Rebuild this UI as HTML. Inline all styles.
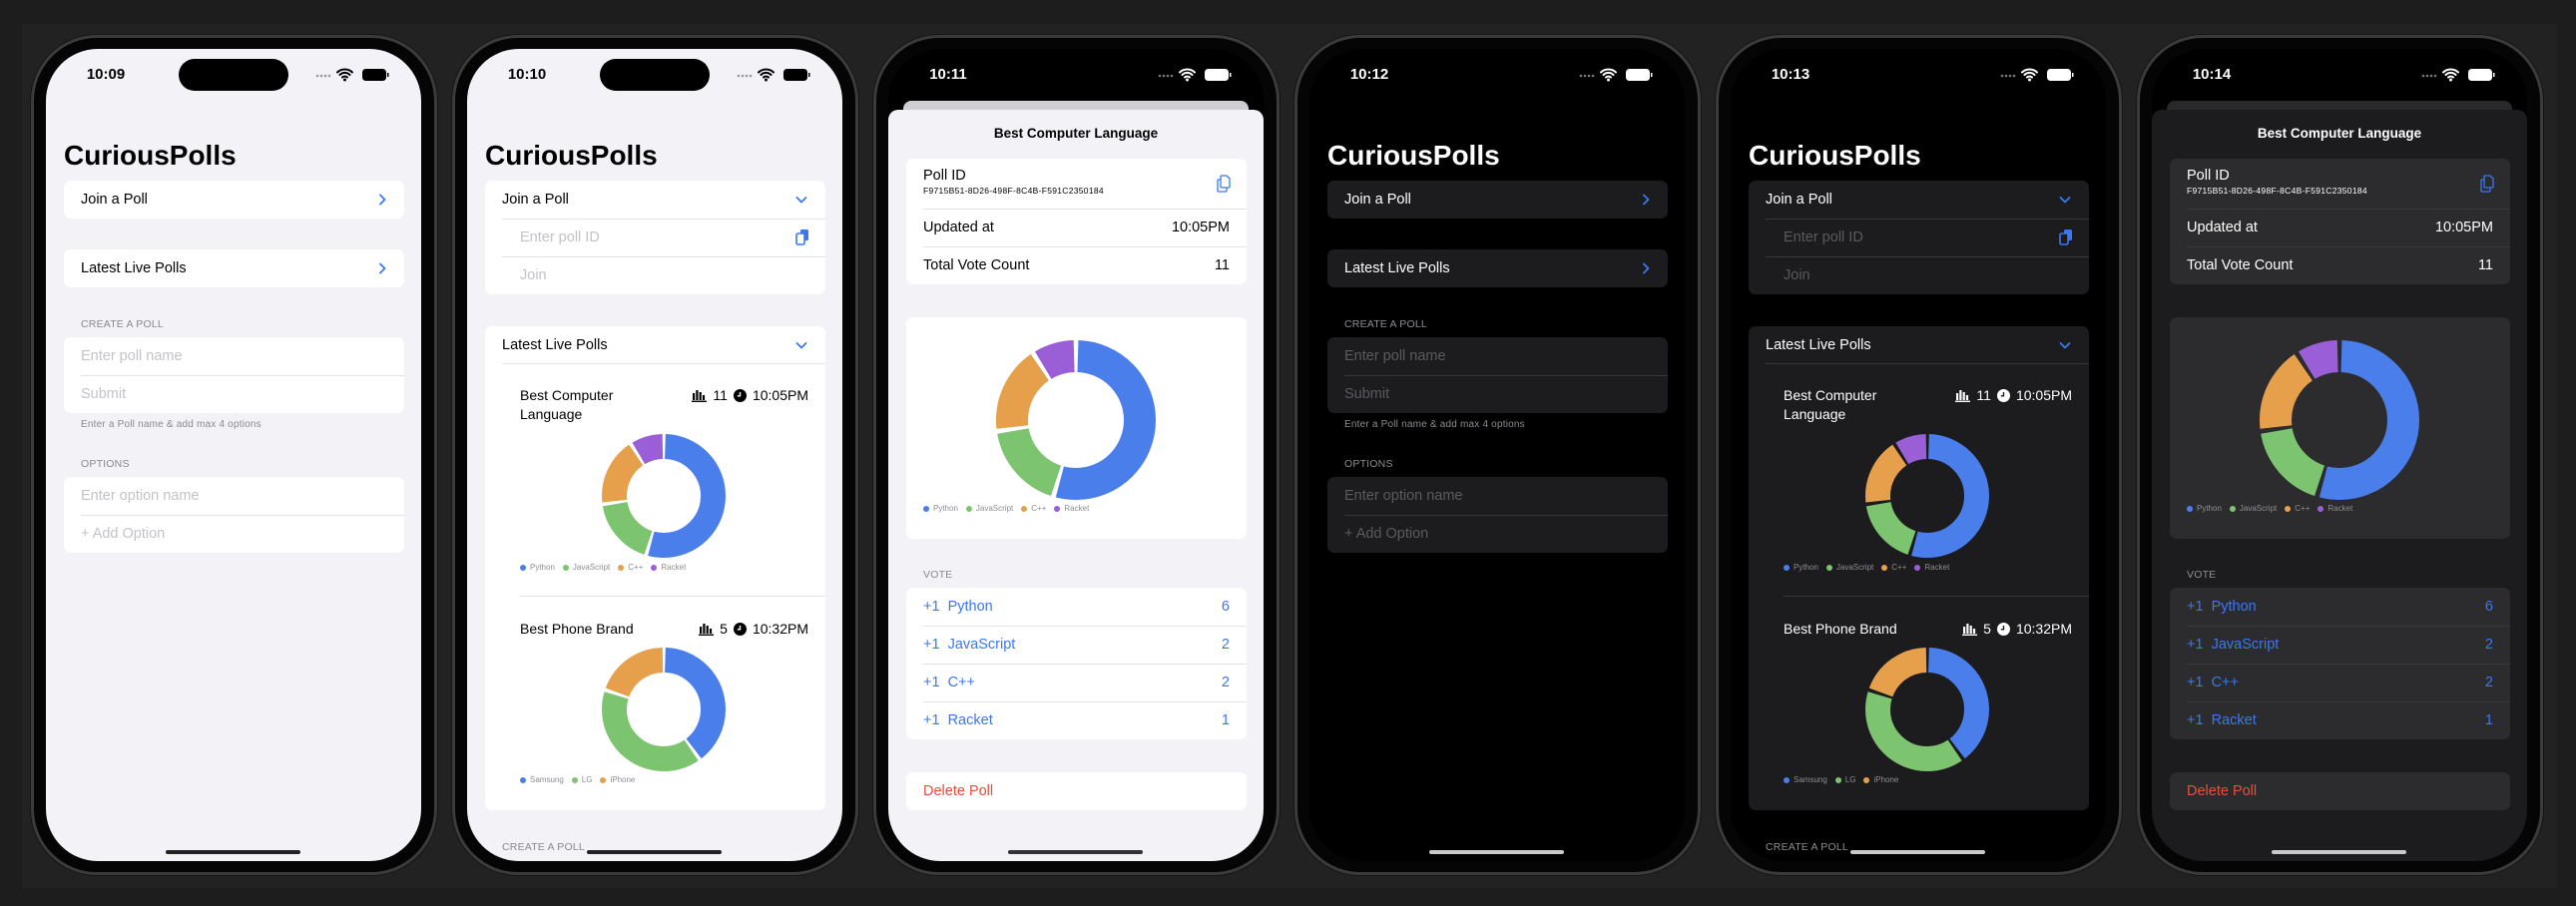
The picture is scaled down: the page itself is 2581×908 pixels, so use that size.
<!DOCTYPE html>
<html><head><meta charset="utf-8">
<style>
*{margin:0;padding:0;box-sizing:border-box}
body{width:2581px;height:908px;background:#1d1d1d;position:relative;overflow:hidden;font-family:"Liberation Sans",sans-serif}
.bgr{position:absolute;left:22px;top:24px;width:2540px;height:866px;background:#222}
.ph{position:absolute;top:35px;width:407px;height:842px;border-radius:66px;background:#050505;border:3px solid #3b3b3d;box-shadow:0 0 0 1px #151515}
.sc{position:absolute;left:12px;top:11px;width:376px;height:814px;border-radius:52px;overflow:hidden;background:#f2f2f7}
.d .sc{background:#000}
.a{position:absolute}
.time{left:30px;top:17px;width:60px;text-align:center;font-size:15px;line-height:18px;font-weight:bold;color:#000}
.d .time,.blk .time{color:#fff}
.isl{left:133px;top:10px;width:110px;height:32px;border-radius:16px;background:#000}
.title{left:18px;top:93px;font-size:28px;line-height:28px;font-weight:bold;color:#000}
.d .title{color:#fff}
.card{position:absolute;left:18px;width:341px;background:#fff;border-radius:7px;overflow:hidden}
.d .card{background:#1c1c1e}
.row{position:relative;height:38px;display:flex;align-items:center;padding:0 17px;font-size:14.5px;color:#000}
.d .row{color:#fff}
.row+.row:before{content:"";position:absolute;left:17px;right:0;top:0;border-top:1px solid #e2e2e6}
.d .row+.row:before{border-color:#38383a}
.ph1{color:#c3c3c7!important}
.d .ph1{color:#5a5a5f!important}
.ind{padding-left:35px}
.lbl{position:absolute;left:35px;font-size:10.5px;line-height:12px;color:#8a8a8e;letter-spacing:.2px}
.d .lbl{color:#8d8d93}
.chev{position:absolute;right:18px;top:13px}
.home{left:120px;top:803px;width:135px;height:4px;border-radius:2px;background:#222}
.d .home,.blk .home{background:#c9c9c9}
.sb{position:absolute;left:270px;top:18px}
.stat{position:absolute;right:17px;font-size:14px;line-height:17px;display:flex;align-items:center;gap:6px;color:#000}
.d .stat{color:#fff}
.ptitle{position:absolute;left:35px;font-size:14px;line-height:19px;color:#000}
.d .ptitle{color:#fff}
.leg{position:absolute;left:35px;font-size:8px;line-height:10px;color:#8e8e93;display:flex;align-items:center;gap:4px}
.leg i{display:inline-block;width:6px;height:6px;border-radius:3px;margin-left:4px}
.leg i:first-child{margin-left:0}
.sep{position:absolute;left:35px;right:0;border-top:1px solid #e2e2e6}
.d .sep{border-color:#38383a}
.sheet{position:absolute;left:0;top:61px;width:376px;height:760px;border-radius:10px 10px 0 0;background:#f2f2f7}
.d .sheet{background:#1c1c1e}
.d .sheet .card{background:#2c2c2e}
.strip{position:absolute;left:15px;top:52px;width:346px;height:20px;border-radius:8px;background:#cfcfd3}
.d .strip{background:#29292b}
.vote{color:#3b78ef!important;justify-content:space-between}
.del{color:#e5503d!important}
.sheet .lbl{left:35px}
</style></head><body>
<div class="bgr"></div>

<!-- PHONE 1 -->
<div class="ph" style="left:31px"><div class="sc">
 <div class="a time">10:09</div><div class="a isl"></div>
 <svg class="sb" width="74" height="16" viewBox="0 0 74 16"><g fill="#9a9a9a"><circle cx="2" cy="9" r="1.3"/><circle cx="6" cy="9" r="1.3"/><circle cx="10" cy="9" r="1.3"/><circle cx="14" cy="9" r="1.3"/></g><path d="M22 5.5a11 11 0 0 1 15 0M24.5 8a7 7 0 0 1 10 0M27 10.5a3.5 3.5 0 0 1 5 0" stroke="#000" stroke-width="2" fill="none" stroke-linecap="round"/><circle cx="29.5" cy="13" r="1.5" fill="#000"/><rect x="47" y="2" width="24" height="12" rx="3.5" fill="#000"/><rect x="72" y="6" width="1.5" height="4" fill="#000"/></svg>
 <div class="a title">CuriousPolls</div>
 <div class="card" style="top:132px"><div class="row">Join a Poll<svg class="chev" width="8" height="12" viewBox="0 0 8 12"><path d="M2 1.5l4.5 4.5-4.5 4.5" stroke="#3b78ef" stroke-width="1.8" fill="none" stroke-linecap="round" stroke-linejoin="round"/></svg></div></div>
 <div class="card" style="top:201px"><div class="row">Latest Live Polls<svg class="chev" width="8" height="12" viewBox="0 0 8 12"><path d="M2 1.5l4.5 4.5-4.5 4.5" stroke="#3b78ef" stroke-width="1.8" fill="none" stroke-linecap="round" stroke-linejoin="round"/></svg></div></div>
 <div class="lbl" style="top:270px">CREATE A POLL</div>
 <div class="card" style="top:289px"><div class="row ph1">Enter poll name</div><div class="row ph1">Submit</div></div>
 <div class="lbl" style="top:371px;font-size:10px">Enter a Poll name &amp; add max 4 options</div>
 <div class="lbl" style="top:410px">OPTIONS</div>
 <div class="card" style="top:429px"><div class="row ph1">Enter option name</div><div class="row ph1">+ Add Option</div></div>
 <div class="a home"></div>
</div></div>

<!-- PHONE 2 -->
<div class="ph" style="left:453px"><div class="sc">
 <div class="a time">10:10</div><div class="a isl"></div>
 <svg class="sb" width="74" height="16" viewBox="0 0 74 16"><g fill="#9a9a9a"><circle cx="2" cy="9" r="1.3"/><circle cx="6" cy="9" r="1.3"/><circle cx="10" cy="9" r="1.3"/><circle cx="14" cy="9" r="1.3"/></g><path d="M22 5.5a11 11 0 0 1 15 0M24.5 8a7 7 0 0 1 10 0M27 10.5a3.5 3.5 0 0 1 5 0" stroke="#000" stroke-width="2" fill="none" stroke-linecap="round"/><circle cx="29.5" cy="13" r="1.5" fill="#000"/><rect x="47" y="2" width="24" height="12" rx="3.5" fill="#000"/><rect x="72" y="6" width="1.5" height="4" fill="#000"/></svg>
 <div class="a title">CuriousPolls</div>
 <div class="card" style="top:132px">
  <div class="row">Join a Poll<svg class="chev" style="top:15px" width="12" height="8" viewBox="0 0 12 8"><path d="M1.5 2l4.5 4.5 4.5-4.5" stroke="#3b78ef" stroke-width="1.8" fill="none" stroke-linecap="round" stroke-linejoin="round"/></svg></div>
  <div class="row ind ph1">Enter poll ID<svg class="chev" style="top:10px;right:16px" width="14" height="17" viewBox="0 0 14 17"><rect x="5" y="1" width="8" height="11" rx="1.5" fill="#3b78ef"/><rect x="1" y="5" width="8" height="11" rx="1.5" fill="#fff" stroke="#3b78ef" stroke-width="1.6"/></svg></div>
  <div class="row ind ph1">Join</div>
 </div>
 <div class="card" style="top:278px;height:485px">
  <div class="row">Latest Live Polls<svg class="chev" style="top:15px" width="12" height="8" viewBox="0 0 12 8"><path d="M1.5 2l4.5 4.5 4.5-4.5" stroke="#3b78ef" stroke-width="1.8" fill="none" stroke-linecap="round" stroke-linejoin="round"/></svg></div>
  <div class="sep" style="top:37px;left:17px"></div>
  <div class="ptitle" style="top:60px">Best Computer<br>Language</div>
  <div class="stat" style="top:61px"><svg width="15" height="12" viewBox="0 0 15 12"><g fill="currentColor"><rect x="1" y="3" width="2.2" height="7"/><rect x="4.3" y="0" width="2.2" height="10"/><rect x="7.6" y="2" width="2.2" height="8"/><rect x="10.9" y="5" width="2.2" height="5"/><rect x="0" y="10.6" width="15" height="1.4"/></g></svg>11<svg width="13" height="13" viewBox="0 0 13 13"><circle cx="6.5" cy="6.5" r="6.5" fill="currentColor"/><path d="M6.5 3v3.8H3.8" stroke="#fff" stroke-width="1.4" fill="none"/></svg>10:05PM</div>
  <svg class="a" style="left:117px;top:108px" width="124" height="124" viewBox="-62 -62 124 124"><g transform="rotate(-90)" fill="none" stroke-width="25"><circle r="49.5" stroke="#4a7eea" stroke-dasharray="166.6 400" stroke-dashoffset="-1.5"/><circle r="49.5" stroke="#7dc471" stroke-dasharray="53.5 400" stroke-dashoffset="-171.1"/><circle r="49.5" stroke="#e6a04b" stroke-dasharray="53.5 400" stroke-dashoffset="-227.6"/><circle r="49.5" stroke="#9a5fd6" stroke-dasharray="25.3 400" stroke-dashoffset="-284.1"/></g></svg>
  <div class="leg" style="top:237px"><i style="background:#4a7eea"></i>Python<i style="background:#7dc471"></i>JavaScript<i style="background:#e6a04b"></i>C++<i style="background:#9a5fd6"></i>Racket</div>
  <div class="sep" style="top:270px"></div>
  <div class="ptitle" style="top:294px">Best Phone Brand</div>
  <div class="stat" style="top:295px"><svg width="15" height="12" viewBox="0 0 15 12"><g fill="currentColor"><rect x="1" y="3" width="2.2" height="7"/><rect x="4.3" y="0" width="2.2" height="10"/><rect x="7.6" y="2" width="2.2" height="8"/><rect x="10.9" y="5" width="2.2" height="5"/><rect x="0" y="10.6" width="15" height="1.4"/></g></svg>5<svg width="13" height="13" viewBox="0 0 13 13"><circle cx="6.5" cy="6.5" r="6.5" fill="currentColor"/><path d="M6.5 3v3.8H3.8" stroke="#fff" stroke-width="1.4" fill="none"/></svg>10:32PM</div>
  <svg class="a" style="left:117px;top:322px" width="124" height="124" viewBox="-62 -62 124 124"><g transform="rotate(-90)" fill="none" stroke-width="25"><circle r="49.5" stroke="#4a7eea" stroke-dasharray="121.4 400" stroke-dashoffset="-1.5"/><circle r="49.5" stroke="#7dc471" stroke-dasharray="121.4 400" stroke-dashoffset="-125.9"/><circle r="49.5" stroke="#e6a04b" stroke-dasharray="59.2 400" stroke-dashoffset="-250.3"/></g></svg>
  <div class="leg" style="top:450px"><i style="background:#4a7eea"></i>Samsung<i style="background:#7dc471"></i>LG<i style="background:#e6a04b"></i>iPhone</div>
 </div>
 <div class="lbl" style="top:794px">CREATE A POLL</div>
 <div class="a home"></div>
</div></div>

<!-- PHONE 3 -->
<div class="ph blk" style="left:875px"><div class="sc" style="background:#000">
 <div class="a time">10:11</div>
 <svg class="sb" width="74" height="16" viewBox="0 0 74 16"><g fill="#777"><circle cx="2" cy="9" r="1.3"/><circle cx="6" cy="9" r="1.3"/><circle cx="10" cy="9" r="1.3"/><circle cx="14" cy="9" r="1.3"/></g><path d="M22 5.5a11 11 0 0 1 15 0M24.5 8a7 7 0 0 1 10 0M27 10.5a3.5 3.5 0 0 1 5 0" stroke="#fff" stroke-width="2" fill="none" stroke-linecap="round"/><circle cx="29.5" cy="13" r="1.5" fill="#fff"/><rect x="47" y="2" width="24" height="12" rx="3.5" fill="#fff"/><rect x="72" y="6" width="1.5" height="4" fill="#fff"/></svg>
 <div class="strip"></div>
 <div class="sheet">
  <div class="a" style="left:0;width:376px;top:16px;text-align:center;font-size:13.5px;line-height:16px;font-weight:bold;color:#000">Best Computer Language</div>
  <div class="card" style="top:49px">
   <div class="row" style="height:50px;display:block;padding-top:9px">Poll ID<div style="font-size:8.5px;margin-top:2px;letter-spacing:.3px">F9715B51-8D26-498F-8C4B-F591C2350184</div><svg class="chev" style="top:16px;right:16px" width="14" height="18" viewBox="0 0 14 18"><path d="M5 1h5l3 3v8a1 1 0 0 1-1 1H5a1 1 0 0 1-1-1V2a1 1 0 0 1 1-1zM4 5H2a1 1 0 0 0-1 1v10a1 1 0 0 0 1 1h7a1 1 0 0 0 1-1v-3" stroke="#3b78ef" stroke-width="1.3" fill="none"/></svg></div>
   <div class="row" style="justify-content:space-between">Updated at<span>10:05PM</span></div>
   <div class="row" style="justify-content:space-between">Total Vote Count<span>11</span></div>
  </div>
  <div class="card" style="top:208px;height:222px">
   <svg class="a" style="left:90px;top:23px" width="160" height="160" viewBox="-80 -80 160 160"><g transform="rotate(-90)" fill="none" stroke-width="32"><circle r="64" stroke="#4a7eea" stroke-dasharray="215.3 500" stroke-dashoffset="-2"/><circle r="64" stroke="#7dc471" stroke-dasharray="69.1 500" stroke-dashoffset="-221.3"/><circle r="64" stroke="#e6a04b" stroke-dasharray="69.1 500" stroke-dashoffset="-294.4"/><circle r="64" stroke="#9a5fd6" stroke-dasharray="32.6 500" stroke-dashoffset="-367.5"/></g></svg>
   <div class="leg" style="top:187px;left:17px"><i style="background:#4a7eea"></i>Python<i style="background:#7dc471"></i>JavaScript<i style="background:#e6a04b"></i>C++<i style="background:#9a5fd6"></i>Racket</div>
  </div>
  <div class="lbl" style="top:460px">VOTE</div>
  <div class="card" style="top:479px">
   <div class="row vote"><span>+1&nbsp; Python</span><span>6</span></div>
   <div class="row vote"><span>+1&nbsp; JavaScript</span><span>2</span></div>
   <div class="row vote"><span>+1&nbsp; C++</span><span>2</span></div>
   <div class="row vote"><span>+1&nbsp; Racket</span><span>1</span></div>
  </div>
  <div class="card" style="top:664px"><div class="row del">Delete Poll</div></div>
 </div>
 <div class="a home" style="background:#333"></div>
</div></div>

<!-- PHONE 4 dark -->
<div class="ph d" style="left:1297px"><div class="sc">
 <div class="a time">10:12</div><div class="a isl"></div>
 <svg class="sb" width="74" height="16" viewBox="0 0 74 16"><g fill="#777"><circle cx="2" cy="9" r="1.3"/><circle cx="6" cy="9" r="1.3"/><circle cx="10" cy="9" r="1.3"/><circle cx="14" cy="9" r="1.3"/></g><path d="M22 5.5a11 11 0 0 1 15 0M24.5 8a7 7 0 0 1 10 0M27 10.5a3.5 3.5 0 0 1 5 0" stroke="#fff" stroke-width="2" fill="none" stroke-linecap="round"/><circle cx="29.5" cy="13" r="1.5" fill="#fff"/><rect x="47" y="2" width="24" height="12" rx="3.5" fill="#fff"/><rect x="72" y="6" width="1.5" height="4" fill="#fff"/></svg>
 <div class="a title">CuriousPolls</div>
 <div class="card" style="top:132px"><div class="row">Join a Poll<svg class="chev" width="8" height="12" viewBox="0 0 8 12"><path d="M2 1.5l4.5 4.5-4.5 4.5" stroke="#3b78ef" stroke-width="1.8" fill="none" stroke-linecap="round" stroke-linejoin="round"/></svg></div></div>
 <div class="card" style="top:201px"><div class="row">Latest Live Polls<svg class="chev" width="8" height="12" viewBox="0 0 8 12"><path d="M2 1.5l4.5 4.5-4.5 4.5" stroke="#3b78ef" stroke-width="1.8" fill="none" stroke-linecap="round" stroke-linejoin="round"/></svg></div></div>
 <div class="lbl" style="top:270px">CREATE A POLL</div>
 <div class="card" style="top:289px"><div class="row ph1">Enter poll name</div><div class="row ph1">Submit</div></div>
 <div class="lbl" style="top:371px;font-size:10px">Enter a Poll name &amp; add max 4 options</div>
 <div class="lbl" style="top:410px">OPTIONS</div>
 <div class="card" style="top:429px"><div class="row ph1">Enter option name</div><div class="row ph1">+ Add Option</div></div>
 <div class="a home"></div>
</div></div>

<!-- PHONE 5 dark -->
<div class="ph d" style="left:1719px"><div class="sc">
 <div class="a time">10:13</div><div class="a isl"></div>
 <svg class="sb" width="74" height="16" viewBox="0 0 74 16"><g fill="#777"><circle cx="2" cy="9" r="1.3"/><circle cx="6" cy="9" r="1.3"/><circle cx="10" cy="9" r="1.3"/><circle cx="14" cy="9" r="1.3"/></g><path d="M22 5.5a11 11 0 0 1 15 0M24.5 8a7 7 0 0 1 10 0M27 10.5a3.5 3.5 0 0 1 5 0" stroke="#fff" stroke-width="2" fill="none" stroke-linecap="round"/><circle cx="29.5" cy="13" r="1.5" fill="#fff"/><rect x="47" y="2" width="24" height="12" rx="3.5" fill="#fff"/><rect x="72" y="6" width="1.5" height="4" fill="#fff"/></svg>
 <div class="a title">CuriousPolls</div>
 <div class="card" style="top:132px">
  <div class="row">Join a Poll<svg class="chev" style="top:15px" width="12" height="8" viewBox="0 0 12 8"><path d="M1.5 2l4.5 4.5 4.5-4.5" stroke="#3b78ef" stroke-width="1.8" fill="none" stroke-linecap="round" stroke-linejoin="round"/></svg></div>
  <div class="row ind ph1">Enter poll ID<svg class="chev" style="top:10px;right:16px" width="14" height="17" viewBox="0 0 14 17"><rect x="5" y="1" width="8" height="11" rx="1.5" fill="#3b78ef"/><rect x="1" y="5" width="8" height="11" rx="1.5" fill="#1c1c1e" stroke="#3b78ef" stroke-width="1.6"/></svg></div>
  <div class="row ind ph1">Join</div>
 </div>
 <div class="card" style="top:278px;height:485px">
  <div class="row">Latest Live Polls<svg class="chev" style="top:15px" width="12" height="8" viewBox="0 0 12 8"><path d="M1.5 2l4.5 4.5 4.5-4.5" stroke="#3b78ef" stroke-width="1.8" fill="none" stroke-linecap="round" stroke-linejoin="round"/></svg></div>
  <div class="sep" style="top:37px;left:17px"></div>
  <div class="ptitle" style="top:60px">Best Computer<br>Language</div>
  <div class="stat" style="top:61px"><svg width="15" height="12" viewBox="0 0 15 12"><g fill="currentColor"><rect x="1" y="3" width="2.2" height="7"/><rect x="4.3" y="0" width="2.2" height="10"/><rect x="7.6" y="2" width="2.2" height="8"/><rect x="10.9" y="5" width="2.2" height="5"/><rect x="0" y="10.6" width="15" height="1.4"/></g></svg>11<svg width="13" height="13" viewBox="0 0 13 13"><circle cx="6.5" cy="6.5" r="6.5" fill="currentColor"/><path d="M6.5 3v3.8H3.8" stroke="#1c1c1e" stroke-width="1.4" fill="none"/></svg>10:05PM</div>
  <svg class="a" style="left:117px;top:108px" width="124" height="124" viewBox="-62 -62 124 124"><g transform="rotate(-90)" fill="none" stroke-width="25"><circle r="49.5" stroke="#4a7eea" stroke-dasharray="166.6 400" stroke-dashoffset="-1.5"/><circle r="49.5" stroke="#7dc471" stroke-dasharray="53.5 400" stroke-dashoffset="-171.1"/><circle r="49.5" stroke="#e6a04b" stroke-dasharray="53.5 400" stroke-dashoffset="-227.6"/><circle r="49.5" stroke="#9a5fd6" stroke-dasharray="25.3 400" stroke-dashoffset="-284.1"/></g></svg>
  <div class="leg" style="top:237px"><i style="background:#4a7eea"></i>Python<i style="background:#7dc471"></i>JavaScript<i style="background:#e6a04b"></i>C++<i style="background:#9a5fd6"></i>Racket</div>
  <div class="sep" style="top:270px"></div>
  <div class="ptitle" style="top:294px">Best Phone Brand</div>
  <div class="stat" style="top:295px"><svg width="15" height="12" viewBox="0 0 15 12"><g fill="currentColor"><rect x="1" y="3" width="2.2" height="7"/><rect x="4.3" y="0" width="2.2" height="10"/><rect x="7.6" y="2" width="2.2" height="8"/><rect x="10.9" y="5" width="2.2" height="5"/><rect x="0" y="10.6" width="15" height="1.4"/></g></svg>5<svg width="13" height="13" viewBox="0 0 13 13"><circle cx="6.5" cy="6.5" r="6.5" fill="currentColor"/><path d="M6.5 3v3.8H3.8" stroke="#1c1c1e" stroke-width="1.4" fill="none"/></svg>10:32PM</div>
  <svg class="a" style="left:117px;top:322px" width="124" height="124" viewBox="-62 -62 124 124"><g transform="rotate(-90)" fill="none" stroke-width="25"><circle r="49.5" stroke="#4a7eea" stroke-dasharray="121.4 400" stroke-dashoffset="-1.5"/><circle r="49.5" stroke="#7dc471" stroke-dasharray="121.4 400" stroke-dashoffset="-125.9"/><circle r="49.5" stroke="#e6a04b" stroke-dasharray="59.2 400" stroke-dashoffset="-250.3"/></g></svg>
  <div class="leg" style="top:450px"><i style="background:#4a7eea"></i>Samsung<i style="background:#7dc471"></i>LG<i style="background:#e6a04b"></i>iPhone</div>
 </div>
 <div class="lbl" style="top:794px">CREATE A POLL</div>
 <div class="a home"></div>
</div></div>

<!-- PHONE 6 dark sheet -->
<div class="ph d" style="left:2141px"><div class="sc">
 <div class="a time">10:14</div>
 <svg class="sb" width="74" height="16" viewBox="0 0 74 16"><g fill="#777"><circle cx="2" cy="9" r="1.3"/><circle cx="6" cy="9" r="1.3"/><circle cx="10" cy="9" r="1.3"/><circle cx="14" cy="9" r="1.3"/></g><path d="M22 5.5a11 11 0 0 1 15 0M24.5 8a7 7 0 0 1 10 0M27 10.5a3.5 3.5 0 0 1 5 0" stroke="#fff" stroke-width="2" fill="none" stroke-linecap="round"/><circle cx="29.5" cy="13" r="1.5" fill="#fff"/><rect x="47" y="2" width="24" height="12" rx="3.5" fill="#fff"/><rect x="72" y="6" width="1.5" height="4" fill="#fff"/></svg>
 <div class="strip"></div>
 <div class="sheet">
  <div class="a" style="left:0;width:376px;top:16px;text-align:center;font-size:13.5px;line-height:16px;font-weight:bold;color:#fff">Best Computer Language</div>
  <div class="card" style="top:49px">
   <div class="row" style="height:50px;display:block;padding-top:9px">Poll ID<div style="font-size:8.5px;margin-top:2px;letter-spacing:.3px">F9715B51-8D26-498F-8C4B-F591C2350184</div><svg class="chev" style="top:16px;right:16px" width="14" height="18" viewBox="0 0 14 18"><path d="M5 1h5l3 3v8a1 1 0 0 1-1 1H5a1 1 0 0 1-1-1V2a1 1 0 0 1 1-1zM4 5H2a1 1 0 0 0-1 1v10a1 1 0 0 0 1 1h7a1 1 0 0 0 1-1v-3" stroke="#3b78ef" stroke-width="1.3" fill="none"/></svg></div>
   <div class="row" style="justify-content:space-between">Updated at<span>10:05PM</span></div>
   <div class="row" style="justify-content:space-between">Total Vote Count<span>11</span></div>
  </div>
  <div class="card" style="top:208px;height:222px">
   <svg class="a" style="left:90px;top:23px" width="160" height="160" viewBox="-80 -80 160 160"><g transform="rotate(-90)" fill="none" stroke-width="32"><circle r="64" stroke="#4a7eea" stroke-dasharray="215.3 500" stroke-dashoffset="-2"/><circle r="64" stroke="#7dc471" stroke-dasharray="69.1 500" stroke-dashoffset="-221.3"/><circle r="64" stroke="#e6a04b" stroke-dasharray="69.1 500" stroke-dashoffset="-294.4"/><circle r="64" stroke="#9a5fd6" stroke-dasharray="32.6 500" stroke-dashoffset="-367.5"/></g></svg>
   <div class="leg" style="top:187px;left:17px"><i style="background:#4a7eea"></i>Python<i style="background:#7dc471"></i>JavaScript<i style="background:#e6a04b"></i>C++<i style="background:#9a5fd6"></i>Racket</div>
  </div>
  <div class="lbl" style="top:460px">VOTE</div>
  <div class="card" style="top:479px">
   <div class="row vote"><span>+1&nbsp; Python</span><span>6</span></div>
   <div class="row vote"><span>+1&nbsp; JavaScript</span><span>2</span></div>
   <div class="row vote"><span>+1&nbsp; C++</span><span>2</span></div>
   <div class="row vote"><span>+1&nbsp; Racket</span><span>1</span></div>
  </div>
  <div class="card" style="top:664px"><div class="row del">Delete Poll</div></div>
 </div>
 <div class="a home"></div>
</div></div>

</body></html>
